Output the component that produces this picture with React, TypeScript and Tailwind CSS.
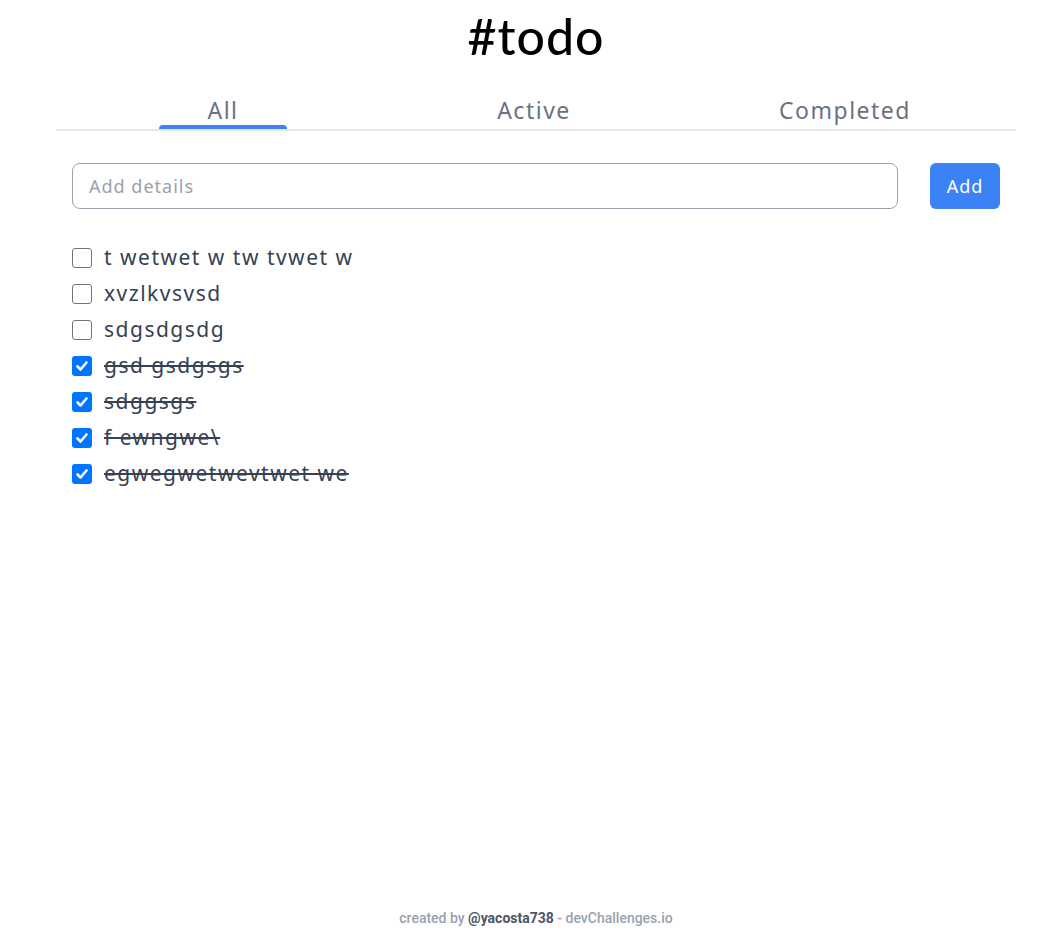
import React, { useState } from 'react';

type Todo = { id: number; text: string; done: boolean };

const initialTodos: Todo[] = [
  { id: 1, text: 't wetwet w tw tvwet w', done: false },
  { id: 2, text: 'xvzlkvsvsd', done: false },
  { id: 3, text: 'sdgsdgsdg', done: false },
  { id: 4, text: 'gsd gsdgsgs', done: true },
  { id: 5, text: 'sdggsgs', done: true },
  { id: 6, text: 'f ewngwe\\', done: true },
  { id: 7, text: 'egwegwetwevtwet we', done: true },
];

const CheckBox: React.FC<{ checked: boolean; onClick: () => void }> = ({ checked, onClick }) => {
  if (checked) {
    return (
      <button onClick={onClick} className="w-5 h-5 rounded-[3px] bg-[#0075ff] flex items-center justify-center shrink-0">
        <svg viewBox="0 0 16 16" className="w-4 h-4" fill="none" stroke="white" strokeWidth="2.6" strokeLinecap="round" strokeLinejoin="round">
          <path d="M3.5 8.5l3 3 6-7" />
        </svg>
      </button>
    );
  }
  return (
    <button onClick={onClick} className="w-5 h-5 rounded-[3px] border border-[#767676] bg-white shrink-0"></button>
  );
};

export default function App() {
  const [todos, setTodos] = useState<Todo[]>(initialTodos);
  const [tab, setTab] = useState('All');

  const toggle = (id: number) =>
    setTodos(todos.map((t) => (t.id === id ? { ...t, done: !t.done } : t)));

  return (
    <div className="min-h-[944px] flex flex-col bg-white font-['Noto_Sans',sans-serif]">
      <div className="w-[960px] ml-[56px] flex-grow">
        {/* Title */}
        <h1 className="text-center text-[50px] leading-none font-medium tracking-[1px] text-black pt-[11px] font-['Lato',sans-serif]">
          #todo
        </h1>

        {/* Tabs */}
        <div className="mt-[38px] flex border-b-2 border-gray-200 pl-[103px] gap-[183px]">
          {['All', 'Active', 'Completed'].map((name) => (
            <button
              key={name}
              onClick={() => setTab(name)}
              className="w-32 flex flex-col items-center text-[23px] tracking-[1.5px] text-gray-500 leading-none"
            >
              <span className="pb-[3px]">{name}</span>
              <span className={`h-1 w-full rounded-t-md ${tab === name ? 'bg-[#3b82f6]' : 'bg-transparent'}`}></span>
            </button>
          ))}
        </div>

        {/* Input */}
        <div className="mt-[32px] px-4 flex items-center gap-8">
          <input
            placeholder="Add details"
            className="flex-grow h-[46px] rounded-lg border border-gray-400 px-4 text-lg tracking-[1px] text-gray-700 placeholder:text-gray-400 outline-none"
          />
          <button className="h-[46px] w-[70px] rounded-md bg-[#3b82f6] text-white text-lg tracking-[1px]">Add</button>
        </div>

        {/* List */}
        <ul className="mt-[31px] px-4 flex flex-col">
          {todos.map((t) => (
            <li key={t.id} className="h-9 flex items-center gap-3">
              <CheckBox checked={t.done} onClick={() => toggle(t.id)} />
              <span className={`text-[21px] tracking-[1.5px] text-gray-700 ${t.done ? 'line-through' : ''}`}>{t.text}</span>
            </li>
          ))}
        </ul>
      </div>

      {/* Footer */}
      <footer className="w-[960px] ml-[56px] pb-[16px] text-center text-sm font-medium text-gray-400 font-['Roboto',sans-serif]">
        created by <span className="font-bold text-gray-600">@yacosta738</span> - devChallenges.io
      </footer>
    </div>
  );
}
